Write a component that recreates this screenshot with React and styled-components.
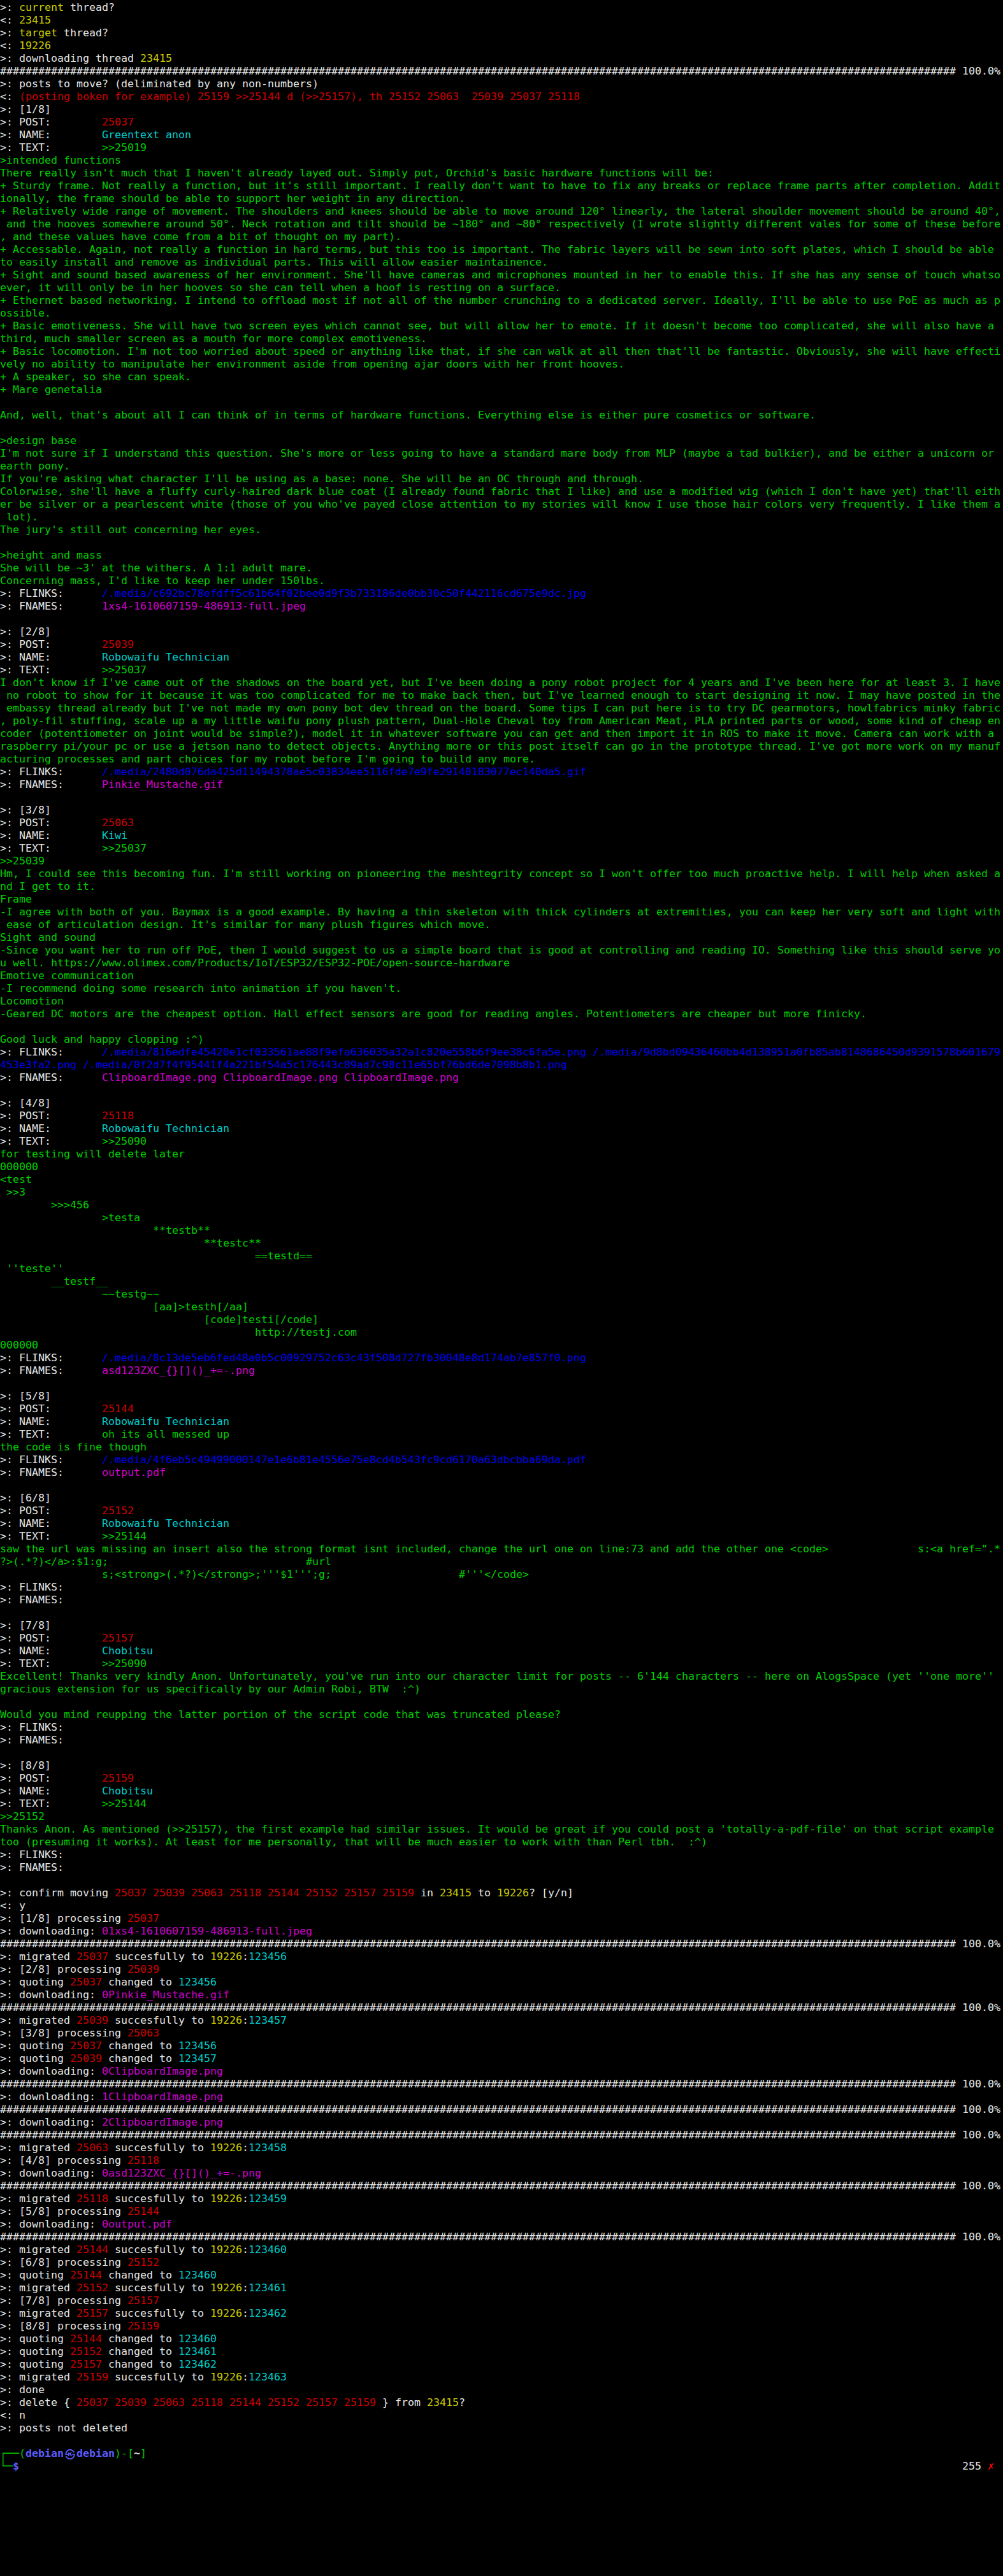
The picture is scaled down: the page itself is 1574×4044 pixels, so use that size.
import styled, { createGlobalStyle } from "styled-components";

const tones = {
  white: "#e5e5e5",
  red: "#cd0000",
  green: "#00cd00",
  yellow: "#cdcd00",
  blue: "#0000ee",
  magenta: "#cd00cd",
  cyan: "#00cdcd",
  prompt: "#5c5cff",
  alert: "#ff0000",
};

const GlobalStyle = createGlobalStyle`
  html, body {
    margin: 0;
    background: #000000;
  }
`;

const Terminal = styled.main`
  box-sizing: border-box;
  width: 1574px;
  min-height: 4044px;
  padding: 2px 4px 0 0;
  background: #000000;
  font-family: "DejaVu Sans Mono", monospace;
  font-size: 16.61px;
  line-height: 20px;
  font-kerning: none;
  font-variant-ligatures: none;
`;

const Row = styled.div`
  height: 20px;
  white-space: pre;
  color: ${tones.white};
`;

const PromptRow = styled(Row)`
  display: flex;
  justify-content: space-between;
`;

const Run = styled.span`
  color: ${({ $tone }) => tones[$tone]};
  font-weight: ${({ $bold }) => ($bold ? "bold" : "normal")};
`;

const Skull = styled.span`
  display: inline-block;
  width: 20px;
  color: ${tones.prompt};
  font-family: "Noto Sans CJK JP", "DejaVu Sans", sans-serif;
  font-size: 16px;
  text-align: center;
  vertical-align: top;
`;

const w = (text) => ({ tone: "white", text });
const r = (text) => ({ tone: "red", text });
const g = (text) => ({ tone: "green", text });
const y = (text) => ({ tone: "yellow", text });
const c = (text) => ({ tone: "cyan", text });
const m = (text) => ({ tone: "magenta", text });
const b = (text) => ({ tone: "blue", text });

const bar = [w("#".repeat(150) + " 100.0%")];
const say = (...parts) => [w(">: "), ...parts];
const answer = (...parts) => [w("<: "), ...parts];
const green = (...texts) => texts.map((text) => (text ? [g(text)] : []));

const post = (step, id, name, first, body, flinks, fnames) => [
  say(w(`[${step}/8]`)),
  say(w("POST:        "), r(id)),
  say(w("NAME:        "), c(name)),
  say(w("TEXT:        "), g(first)),
  ...green(...body),
  ...flinks,
  ...fnames,
  [],
];

const flinks = (text) => [say(w("FLINKS:      "), b(text))];
const fnames = (text) => [say(w("FNAMES:      "), m(text))];

const processing = (step, id) => say(w(`[${step}/8] processing `), r(id));
const quoting = (id, to) => say(w("quoting "), r(id), w(" changed to "), c(to));
const downloading = (name) => say(w("downloading: "), m(name));
const migrated = (id, to) =>
  say(w("migrated "), r(id), w(" succesfully to "), y("19226"), w(":"), c(to));

const lines = [
  say(y("current"), w(" thread?")),
  answer(y("23415")),
  say(y("target"), w(" thread?")),
  answer(y("19226")),
  say(w("downloading thread "), y("23415")),
  bar,
  say(w("posts to move? (deliminated by any non-numbers)")),
  answer(r("(posting boken for example) 25159 >>25144 d (>>25157), th 25152 25063  25039 25037 25118")),
  ...post(
    1,
    "25037",
    "Greentext anon",
    ">>25019",
    [
      ">intended functions",
      "There really isn't much that I haven't already layed out. Simply put, Orchid's basic hardware functions will be:",
      "+ Sturdy frame. Not really a function, but it's still important. I really don't want to have to fix any breaks or replace frame parts after completion. Addit",
      "ionally, the frame should be able to support her weight in any direction.",
      "+ Relatively wide range of movement. The shoulders and knees should be able to move around 120° linearly, the lateral shoulder movement should be around 40°,",
      " and the hooves somewhere around 50°. Neck rotation and tilt should be ~180° and ~80° respectively (I wrote slightly different vales for some of these before",
      ", and these values have come from a bit of thought on my part).",
      "+ Accessable. Again, not really a function in hard terms, but this too is important. The fabric layers will be sewn into soft plates, which I should be able",
      "to easily install and remove as individual parts. This will allow easier maintainence.",
      "+ Sight and sound based awareness of her environment. She'll have cameras and microphones mounted in her to enable this. If she has any sense of touch whatso",
      "ever, it will only be in her hooves so she can tell when a hoof is resting on a surface.",
      "+ Ethernet based networking. I intend to offload most if not all of the number crunching to a dedicated server. Ideally, I'll be able to use PoE as much as p",
      "ossible.",
      "+ Basic emotiveness. She will have two screen eyes which cannot see, but will allow her to emote. If it doesn't become too complicated, she will also have a",
      "third, much smaller screen as a mouth for more complex emotiveness.",
      "+ Basic locomotion. I'm not too worried about speed or anything like that, if she can walk at all then that'll be fantastic. Obviously, she will have effecti",
      "vely no ability to manipulate her environment aside from opening ajar doors with her front hooves.",
      "+ A speaker, so she can speak.",
      "+ Mare genetalia",
      "",
      "And, well, that's about all I can think of in terms of hardware functions. Everything else is either pure cosmetics or software.",
      "",
      ">design base",
      "I'm not sure if I understand this question. She's more or less going to have a standard mare body from MLP (maybe a tad bulkier), and be either a unicorn or",
      "earth pony.",
      "If you're asking what character I'll be using as a base: none. She will be an OC through and through.",
      "Colorwise, she'll have a fluffy curly-haired dark blue coat (I already found fabric that I like) and use a modified wig (which I don't have yet) that'll eith",
      "er be silver or a pearlescent white (those of you who've payed close attention to my stories will know I use those hair colors very frequently. I like them a",
      " lot).",
      "The jury's still out concerning her eyes.",
      "",
      ">height and mass",
      "She will be ~3' at the withers. A 1:1 adult mare.",
      "Concerning mass, I'd like to keep her under 150lbs.",
    ],
    flinks("/.media/c692bc78efdff5c61b64f02bee0d9f3b733186de0bb30c50f442116cd675e9dc.jpg"),
    fnames("1xs4-1610607159-486913-full.jpeg"),
  ),
  ...post(
    2,
    "25039",
    "Robowaifu Technician",
    ">>25037",
    [
      "I don't know if I've came out of the shadows on the board yet, but I've been doing a pony robot project for 4 years and I've been here for at least 3. I have",
      " no robot to show for it because it was too complicated for me to make back then, but I've learned enough to start designing it now. I may have posted in the",
      " embassy thread already but I've not made my own pony bot dev thread on the board. Some tips I can put here is to try DC gearmotors, howlfabrics minky fabric",
      ", poly-fil stuffing, scale up a my little waifu pony plush pattern, Dual-Hole Cheval toy from American Meat, PLA printed parts or wood, some kind of cheap en",
      "coder (potentiometer on joint would be simple?), model it in whatever software you can get and then import it in ROS to make it move. Camera can work with a",
      "raspberry pi/your pc or use a jetson nano to detect objects. Anything more or this post itself can go in the prototype thread. I've got more work on my manuf",
      "acturing processes and part choices for my robot before I'm going to build any more.",
    ],
    flinks("/.media/2480d076da425d11494378ae5c03834ee5116fde7e9fe29140183077ec140da5.gif"),
    fnames("Pinkie_Mustache.gif"),
  ),
  ...post(
    3,
    "25063",
    "Kiwi",
    ">>25037",
    [
      ">>25039",
      "Hm, I could see this becoming fun. I'm still working on pioneering the meshtegrity concept so I won't offer too much proactive help. I will help when asked a",
      "nd I get to it.",
      "Frame",
      "-I agree with both of you. Baymax is a good example. By having a thin skeleton with thick cylinders at extremities, you can keep her very soft and light with",
      " ease of articulation design. It's similar for many plush figures which move.",
      "Sight and sound",
      "-Since you want her to run off PoE, then I would suggest to us a simple board that is good at controlling and reading IO. Something like this should serve yo",
      "u well. https://www.olimex.com/Products/IoT/ESP32/ESP32-POE/open-source-hardware",
      "Emotive communication",
      "-I recommend doing some research into animation if you haven't.",
      "Locomotion",
      "-Geared DC motors are the cheapest option. Hall effect sensors are good for reading angles. Potentiometers are cheaper but more finicky.",
      "",
      "Good luck and happy clopping :^)",
    ],
    [
      ...flinks("/.media/816edfe45420e1cf033561ae88f9efa636035a32a1c820e558b6f9ee38c6fa5e.png /.media/9d8bd09436460bb4d138951a0fb85ab8148686450d9391578b601679"),
      [b("453e3fa2.png /.media/0f2d7f4f95441f4a221bf54a5c176443c89ad7c98c11e65bf76bd6de7098b8b1.png")],
    ],
    fnames("ClipboardImage.png ClipboardImage.png ClipboardImage.png"),
  ),
  ...post(
    4,
    "25118",
    "Robowaifu Technician",
    ">>25090",
    [
      "for testing will delete later",
      "000000",
      "<test",
      " >>3",
      "        >>>456",
      "                >testa",
      "                        **testb**",
      "                                **testc**",
      "                                        ==testd==",
      " ''teste''",
      "        __testf__",
      "                ~~testg~~",
      "                        [aa]>testh[/aa]",
      "                                [code]testi[/code]",
      "                                        http://testj.com",
      "000000",
    ],
    flinks("/.media/8c13de5eb6fed48a0b5c00929752c63c43f508d727fb30048e8d174ab7e857f0.png"),
    fnames("asd123ZXC_{}[]()_+=-.png"),
  ),
  ...post(
    5,
    "25144",
    "Robowaifu Technician",
    "oh its all messed up",
    ["the code is fine though"],
    flinks("/.media/4f6eb5c49499000147e1e6b81e4556e75e8cd4b543fc9cd6170a63dbcbba69da.pdf"),
    fnames("output.pdf"),
  ),
  ...post(
    6,
    "25152",
    "Robowaifu Technician",
    ">>25144",
    [
      "saw the url was missing an insert also the strong format isnt included, change the url one on line:73 and add the other one <code>              s:<a href=\".*",
      "?>(.*?)</a>:$1:g;                               #url",
      "                s;<strong>(.*?)</strong>;'''$1''';g;                    #'''</code>",
    ],
    [say(w("FLINKS:"))],
    [say(w("FNAMES:"))],
  ),
  ...post(
    7,
    "25157",
    "Chobitsu",
    ">>25090",
    [
      "Excellent! Thanks very kindly Anon. Unfortunately, you've run into our character limit for posts -- 6'144 characters -- here on AlogsSpace (yet ''one more''",
      "gracious extension for us specifically by our Admin Robi, BTW  :^)",
      "",
      "Would you mind reupping the latter portion of the script code that was truncated please?",
    ],
    [say(w("FLINKS:"))],
    [say(w("FNAMES:"))],
  ),
  ...post(
    8,
    "25159",
    "Chobitsu",
    ">>25144",
    [
      ">>25152",
      "Thanks Anon. As mentioned (>>25157), the first example had similar issues. It would be great if you could post a 'totally-a-pdf-file' on that script example",
      "too (presuming it works). At least for me personally, that will be much easier to work with than Perl tbh.  :^)",
    ],
    [say(w("FLINKS:"))],
    [say(w("FNAMES:"))],
  ),
  say(
    w("confirm moving "),
    r("25037 25039 25063 25118 25144 25152 25157 25159"),
    w(" in "),
    y("23415"),
    w(" to "),
    y("19226"),
    w("? [y/n]"),
  ),
  answer(w("y")),
  processing(1, "25037"),
  downloading("01xs4-1610607159-486913-full.jpeg"),
  bar,
  migrated("25037", "123456"),
  processing(2, "25039"),
  quoting("25037", "123456"),
  downloading("0Pinkie_Mustache.gif"),
  bar,
  migrated("25039", "123457"),
  processing(3, "25063"),
  quoting("25037", "123456"),
  quoting("25039", "123457"),
  downloading("0ClipboardImage.png"),
  bar,
  downloading("1ClipboardImage.png"),
  bar,
  downloading("2ClipboardImage.png"),
  bar,
  migrated("25063", "123458"),
  processing(4, "25118"),
  downloading("0asd123ZXC_{}[]()_+=-.png"),
  bar,
  migrated("25118", "123459"),
  processing(5, "25144"),
  downloading("0output.pdf"),
  bar,
  migrated("25144", "123460"),
  processing(6, "25152"),
  quoting("25144", "123460"),
  migrated("25152", "123461"),
  processing(7, "25157"),
  migrated("25157", "123462"),
  processing(8, "25159"),
  quoting("25144", "123460"),
  quoting("25152", "123461"),
  quoting("25157", "123462"),
  migrated("25159", "123463"),
  say(w("done")),
  say(
    w("delete { "),
    r("25037 25039 25063 25118 25144 25152 25157 25159"),
    w(" } from "),
    y("23415"),
    w("?"),
  ),
  answer(w("n")),
  say(w("posts not deleted")),
  [],
];

export default function App() {
  return (
    <>
      <GlobalStyle />
      <Terminal>
        {lines.map((parts, i) => (
          <Row key={i}>
            {parts.map((part, j) => (
              <Run key={j} $tone={part.tone}>
                {part.text}
              </Run>
            ))}
          </Row>
        ))}
        <Row>
          <Run $tone="green">┌──(</Run>
          <Run $tone="prompt" $bold>debian</Run>
          <Skull>㉿</Skull>
          <Run $tone="prompt" $bold>debian</Run>
          <Run $tone="green">)-[</Run>
          <Run $tone="white" $bold>~</Run>
          <Run $tone="green">]</Run>
        </Row>
        <PromptRow>
          <span>
            <Run $tone="green">└─</Run>
            <Run $tone="prompt" $bold>$</Run>
          </span>
          <span>
            255 <Run $tone="alert" $bold>✗</Run>{" "}
          </span>
        </PromptRow>
      </Terminal>
    </>
  );
}
